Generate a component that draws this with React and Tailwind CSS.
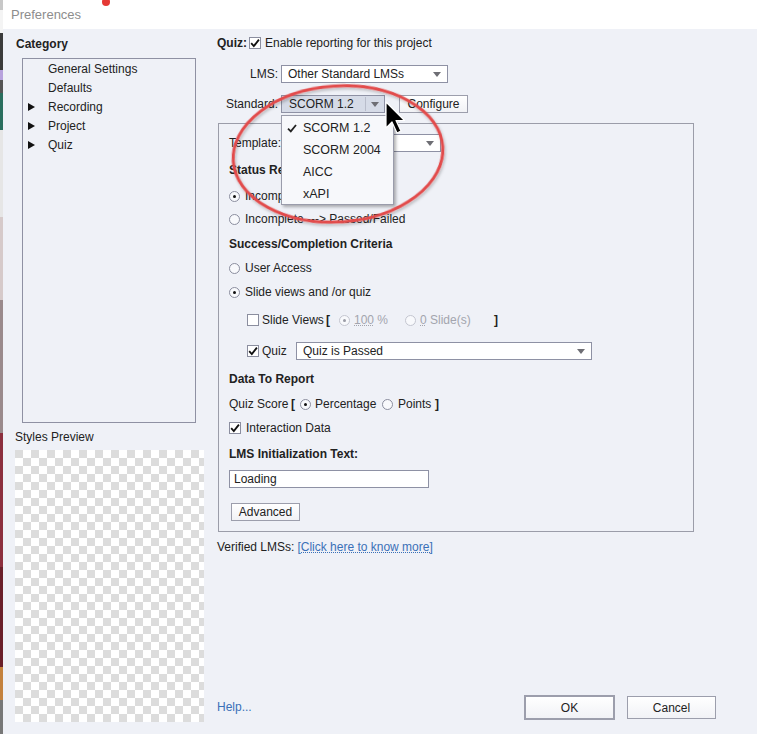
import React from 'react'

// Preferences dialog — Quiz > Reporting, with the Standard dropdown open

const Arrow = () => (
  <svg width="8" height="5" viewBox="0 0 8 5" className="shrink-0">
    <path d="M0 0h8L4 5z" fill="#6e6e74" />
  </svg>
)

const Check = ({ checked }) => (
  <span className="w-[12px] h-[12px] border border-[#8b8e9f] bg-white flex items-center justify-center shrink-0">
    {checked && (
      <svg width="11" height="11" viewBox="0 0 11 11">
        <path d="M1.3 5.2L4.2 8.4L9.8 1.2" stroke="#111" strokeWidth="2" fill="none" />
      </svg>
    )}
  </span>
)

const Radio = ({ on, disabled }) => (
  <span className={`w-[11px] h-[11px] rounded-full border ${disabled ? 'border-[#c4c6d0]' : 'border-[#8b8e9f]'} bg-[#f8f9fc] flex items-center justify-center shrink-0`}>
    {on && <span className={`w-[3px] h-[3px] rounded-full ${disabled ? 'bg-[#9a9ca6]' : 'bg-[#111]'}`} />}
  </span>
)

const Select = ({ className = '', children }) => (
  <div className={`h-[18px] border border-[#8e91a4] bg-white flex items-center pl-[6px] pr-[6px] ${className}`}>
    <span className="flex-1 truncate">{children}</span>
    <Arrow />
  </div>
)

const Button = ({ className = '', children }) => (
  <div className={`border border-[#9c9eac] bg-[linear-gradient(#ffffff,#f1f2f6)] flex items-center justify-center ${className}`}>
    {children}
  </div>
)

const categories = [
  { name: 'General Settings' },
  { name: 'Defaults' },
  { name: 'Recording', arrow: true },
  { name: 'Project', arrow: true },
  { name: 'Quiz', arrow: true },
]

const standards = ['SCORM 1.2', 'SCORM 2004', 'AICC', 'xAPI']

export default function App() {
  return (
    <div className="w-[757px] h-[734px] flex relative overflow-hidden font-['Liberation_Sans',Arial,sans-serif] text-[12px] text-[#222]">
      {/* desktop peeking at the left edge */}
      <div className="w-[3px] shrink-0 bg-[linear-gradient(#c8c8c8_0_10px,#f4f4f4_10px_33px,#3b3b3b_33px_70px,#b7a2dd_70px_80px,#555_80px_93px,#2a6e5e_93px_130px,#e6e6e6_130px_217px,#d6caca_217px_300px,#9a8a8c_300px_433px,#8c2f3e_433px_567px,#6a1f2a_567px_667px,#c4823e_667px_700px,#777_700px)]" />

      <div className="flex-1 flex flex-col">
        {/* title bar */}
        <div className="h-[29px] bg-white flex items-center pl-[8px] text-[13px] text-[#8d8d8d] shrink-0">
          Preferences
        </div>

        <div className="flex-1 bg-[#eff1f7] flex">
          {/* left column */}
          <div className="w-[214px] shrink-0 flex flex-col">
            <div className="mt-[7px] ml-[13px] h-[16px] leading-[16px] font-bold">Category</div>
            <div className="mt-[6px] ml-[19px] w-[174px] h-[365px] border border-[#8f91a3]">
              {categories.map(c => (
                <div key={c.name} className="h-[19px] flex items-center">
                  <span className="w-[25px] pl-[5px] shrink-0">
                    {c.arrow && (
                      <svg width="7" height="8" viewBox="0 0 7 8"><path d="M0 0L7 4L0 8z" fill="#111" /></svg>
                    )}
                  </span>
                  <span>{c.name}</span>
                </div>
              ))}
            </div>
            <div className="mt-[6px] ml-[12px] h-[16px] leading-[16px]">Styles Preview</div>
            <div className="mt-[5px] ml-[12px] w-[189px] h-[272px] bg-[conic-gradient(#fff_25%,#dcdcdc_0_50%,#fff_0_75%,#dcdcdc_0)] bg-[length:16px_16px]" />
          </div>

          {/* right column */}
          <div className="flex-1 flex flex-col pt-[6px] pb-[14px]">
            <div className="h-[16px] flex items-center">
              <span className="w-[32px] font-bold">Quiz:</span>
              <Check checked />
              <span className="ml-[4px]">Enable reporting for this project</span>
            </div>

            <div className="mt-[14px] h-[18px] flex items-center">
              <span className="w-[61px] text-right">LMS:</span>
              <Select className="ml-[3px] w-[167px]">Other Standard LMSs</Select>
            </div>

            <div className="mt-[12px] h-[18px] flex items-center relative z-20">
              <span className="w-[61px] text-right">Standard:</span>
              <div className="ml-[3px] w-[104px] h-[18px] border border-[#8e91a4] bg-[#d6dbe7] flex items-center pl-[7px] relative">
                <span className="flex-1">SCORM 1.2</span>
                <span className="w-px h-[14px] bg-[#b9bdcb]" />
                <span className="w-[18px] flex justify-center"><Arrow /></span>
                {/* open list */}
                <div className="absolute left-[-1px] top-[19px] w-[113px] h-[90px] border border-[#9a9cab] bg-[#f7f8fb] shadow-[2px_2px_3px_rgba(0,0,0,0.3)] pt-px text-[12.5px]">
                  {standards.map((s, i) => (
                    <div key={s} className="h-[22px] flex items-center">
                      <span className="w-[21px] pl-[5px] shrink-0">
                        {i === 0 && (
                          <svg width="10" height="9" viewBox="0 0 10 9"><path d="M1 4.6L3.8 7.4L9 1" stroke="#222" strokeWidth="1.8" fill="none" /></svg>
                        )}
                      </span>
                      <span>{s}</span>
                    </div>
                  ))}
                </div>
              </div>
              <Button className="ml-[14px] w-[69px] h-[18px]">Configure</Button>
            </div>

            {/* reporting panel */}
            <div className="mt-[10px] ml-px w-[476px] border border-[#9b9da9] pl-[10px] pt-[10px] pb-[10px] flex flex-col">
              <div className="h-[18px] flex items-center">
                <span className="w-[52px] whitespace-nowrap">Template:</span>
                <Select className="w-[160px]"></Select>
              </div>
              {/* these rows run under the open list, so they are cut where it begins */}
              <div className="mt-[10px] h-[16px] w-[53px] flex items-center font-bold whitespace-nowrap overflow-hidden">Status Representation</div>
              <div className="mt-[10px] h-[16px] w-[53px] flex items-center gap-[5px] whitespace-nowrap overflow-hidden"><Radio on /><span>Incomplete ---&gt; Complete</span></div>
              <div className="mt-[7px] h-[16px] flex items-center gap-[5px] whitespace-nowrap"><Radio /><span>Incomplete ---&gt; Passed/Failed</span></div>
              <div className="mt-[9px] h-[16px] flex items-center font-bold">Success/Completion Criteria</div>
              <div className="mt-[8px] h-[16px] flex items-center gap-[5px]"><Radio /><span>User Access</span></div>
              <div className="mt-[8px] h-[16px] flex items-center gap-[5px]"><Radio on /><span>Slide views and /or quiz</span></div>

              <div className="mt-[12px] h-[16px] flex items-center pl-[18px] whitespace-nowrap">
                <Check />
                <span className="ml-[3px] w-[64px] shrink-0">Slide Views</span>
                <span className="w-[13px] font-bold shrink-0">[</span>
                <Radio on disabled />
                <span className="ml-[4px] w-[51px] shrink-0 text-[#a3a5ae]"><span className="underline decoration-dotted decoration-[#a3a5ae]">100</span> %</span>
                <Radio disabled />
                <span className="ml-[4px] w-[74px] shrink-0 text-[#a3a5ae]"><span className="underline decoration-dotted decoration-[#a3a5ae]">0</span> Slide(s)</span>
                <span className="font-bold">]</span>
              </div>

              <div className="mt-[14px] h-[18px] flex items-center pl-[18px]">
                <Check checked />
                <span className="ml-[3px] w-[34px]">Quiz</span>
                <Select className="w-[296px]">Quiz is Passed</Select>
              </div>

              <div className="mt-[11px] h-[16px] flex items-center font-bold">Data To Report</div>
              <div className="mt-[9px] h-[16px] flex items-center whitespace-nowrap">
                <span className="w-[62px] shrink-0">Quiz Score</span>
                <span className="w-[9px] font-bold shrink-0">[</span>
                <Radio on />
                <span className="ml-[4px] w-[67px] shrink-0">Percentage</span>
                <Radio />
                <span className="ml-[5px] w-[37px] shrink-0">Points</span>
                <span className="font-bold">]</span>
              </div>
              <div className="mt-[8px] h-[16px] flex items-center gap-[5px]"><Check checked /><span>Interaction Data</span></div>
              <div className="mt-[10px] h-[16px] flex items-center font-bold">LMS Initialization Text:</div>
              <div className="mt-[8px] w-[200px] h-[18px] border border-[#8e91a4] bg-white flex items-center pl-[4px]">Loading</div>
              <Button className="mt-[15px] ml-[2px] w-[69px] h-[18px]">Advanced</Button>
            </div>

            <div className="mt-[7px] h-[16px] flex items-center whitespace-nowrap">
              <span>Verified LMSs:</span>
              <span className="ml-[3px] text-[#3a70b8] underline decoration-dotted decoration-[#3a70b8]">[Click here to know more]</span>
            </div>

            <div className="mt-auto flex items-end">
              <span className="text-[#3a70b8] mb-[4px]">Help...</span>
              <div className="ml-auto mr-[41px] flex items-center">
                <Button className="w-[91px] h-[25px] border-2 border-[#8f91a0]">OK</Button>
                <Button className="ml-[12px] w-[89px] h-[23px]">Cancel</Button>
              </div>
            </div>
          </div>
        </div>
      </div>

      {/* annotations drawn over the screenshot */}
      <svg className="absolute inset-0 pointer-events-none z-30" width="757" height="734" viewBox="0 0 757 734">
        <defs>
          <filter id="sh" x="-20%" y="-20%" width="140%" height="140%">
            <feDropShadow dx="1" dy="2" stdDeviation="1.5" floodColor="#000" floodOpacity="0.25" />
          </filter>
        </defs>
        <circle cx="106" cy="2" r="4" fill="#e53935" />
        <ellipse cx="338" cy="154" rx="105" ry="68" transform="rotate(-4 338 154)" fill="none" stroke="#e24b4b" strokeWidth="3" filter="url(#sh)" />
        <path d="M386 102v26l6-6 5 11 4-2-5-10.5h8.5z" fill="#000" stroke="#fff" strokeWidth="1.2" strokeLinejoin="round" />
      </svg>
    </div>
  )
}
